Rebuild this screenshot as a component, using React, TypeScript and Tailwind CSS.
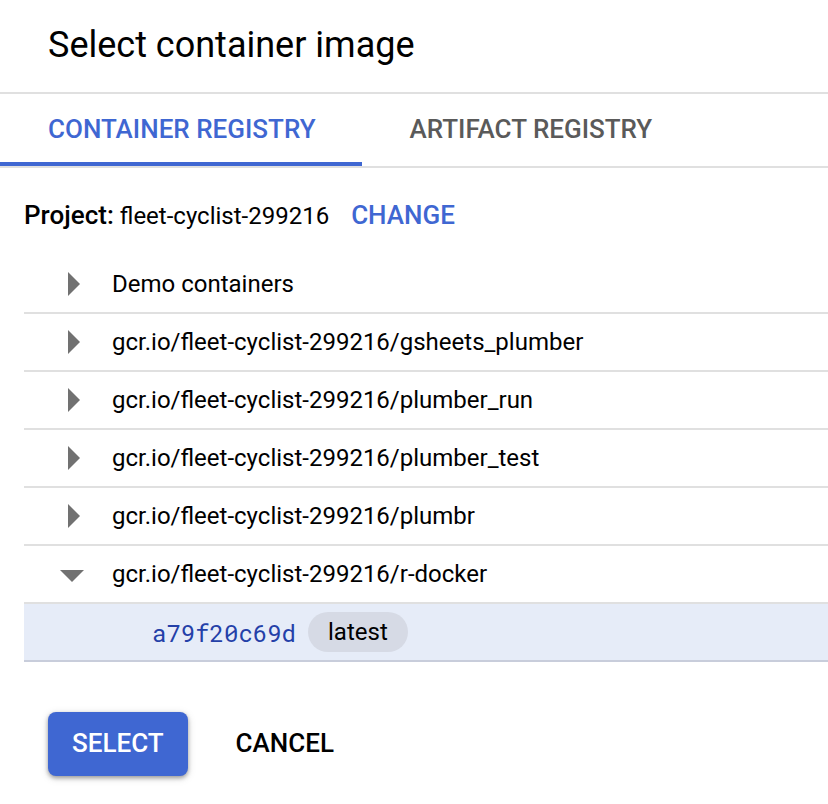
import React from "react";

const images = [
  { name: "Demo containers", open: false },
  { name: "gcr.io/fleet-cyclist-299216/gsheets_plumber", open: false },
  { name: "gcr.io/fleet-cyclist-299216/plumber_run", open: false },
  { name: "gcr.io/fleet-cyclist-299216/plumber_test", open: false },
  { name: "gcr.io/fleet-cyclist-299216/plumbr", open: false },
  { name: "gcr.io/fleet-cyclist-299216/r-docker", open: true },
];

function Arrow({ open }: { open: boolean }) {
  return (
    <svg aria-hidden="true" viewBox="0 0 24 24" className="size-6 fill-[#717171]">
      {open ? <path d="M0 8h24L12 20z" /> : <path d="M8 0v24l12-12z" />}
    </svg>
  );
}

export default function App() {
  return (
    <main className="min-h-screen bg-white pb-7 font-['Roboto',sans-serif] text-2xl text-black">
      <header className="flex h-[94px] items-center border-b-2 border-[#e0e0e0] px-12 pb-0.5">
        <h1 className="text-4xl">Select container image</h1>
      </header>
      <nav className="flex h-[74px] border-b-2 border-[#e0e0e0] text-[26px] font-medium">
        <button type="button" className="border-b-4 border-[#3f67d2] pt-0.5 pr-[46px] pl-12 text-[#3f67d2]">
          CONTAINER REGISTRY
        </button>
        <button type="button" className="border-b-4 border-transparent px-12 pt-0.5 text-[#5a5a5a]">
          ARTIFACT REGISTRY
        </button>
      </nav>
      <section className="pl-6">
        <div className="flex h-[88px] items-center pt-1.5">
          <div className="flex items-baseline">
            <span className="text-[26px] font-medium">Project:</span>
            <span className="ml-1.5">fleet-cyclist-299216</span>
            <button type="button" className="ml-5.5 text-[26px] font-medium text-[#3f67d2]">
              CHANGE
            </button>
          </div>
        </div>
        <ul>
          {images.map((image) => (
            <li key={image.name} className="border-b-2 border-[#e0e0e0]">
              <button type="button" aria-expanded={image.open} className="flex h-14 w-full items-center pl-9 text-left">
                <Arrow open={image.open} />
                <span className="ml-7">{image.name}</span>
              </button>
            </li>
          ))}
          <li className="flex h-[58px] items-center border-b-2 border-[#c8cddb] bg-[#e6ecf8] pl-32">
            <a href="#a79f20c69d" className="pt-0.5 font-['Roboto_Mono','DejaVu_Sans_Mono',monospace] text-[#2440a8]">
              a79f20c69d
            </a>
            <span className="ml-3 flex h-10 items-center rounded-full bg-[#d6dae5] px-5">latest</span>
          </li>
        </ul>
      </section>
      <footer className="mt-[50px] flex gap-6 px-12 text-[26px] font-medium">
        <button
          type="button"
          className="h-16 rounded-lg bg-[#3f67d2] px-6 pb-0.5 text-white shadow-[0_2px_4px_rgba(0,0,0,0.35),0_2px_10px_rgba(0,0,0,0.12)]"
        >
          SELECT
        </button>
        <button type="button" className="h-16 px-6 pb-0.5">
          CANCEL
        </button>
      </footer>
    </main>
  );
}
